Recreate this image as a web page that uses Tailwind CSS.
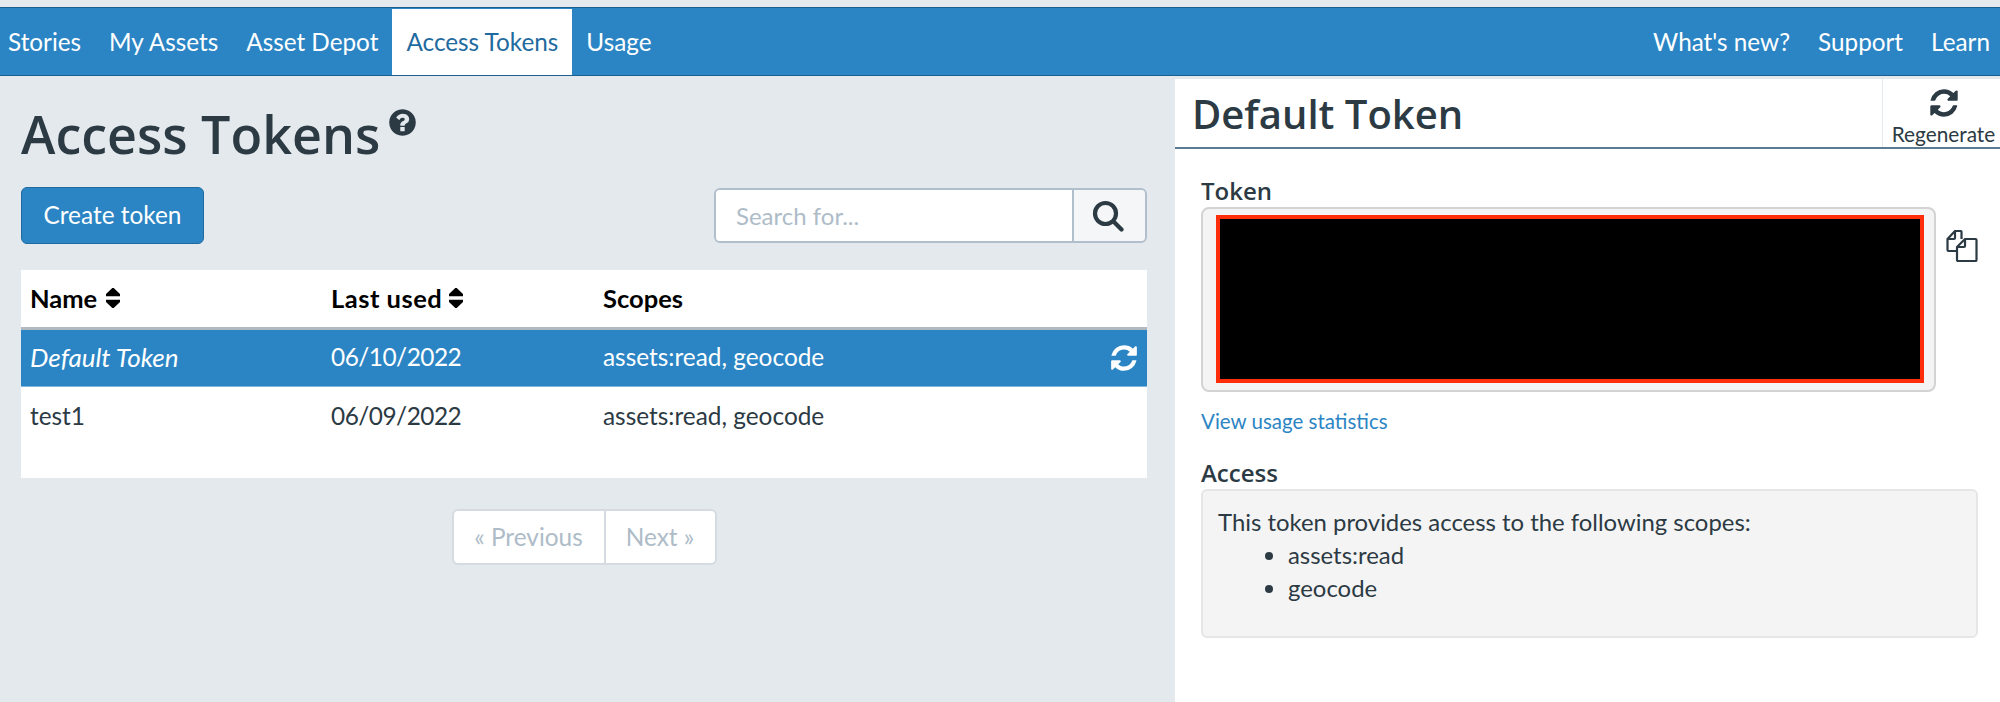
<!DOCTYPE html>
<html lang="en">
<head>
    <meta charset="UTF-8">
    <title>Access Tokens</title>
    <script src="https://cdn.jsdelivr.net/npm/@tailwindcss/browser@4"></script>
</head>
<body class="h-screen overflow-hidden bg-[#e4e9ed] pt-[7px] font-['Lato',sans-serif] text-[24.4px] text-[#2c3a44]">

    <!-- Top nav -->
    <nav class="flex h-[69px] justify-between border-y border-[#1a5f8f] bg-[#2b85c4] text-[24.3px] text-white">
        <div class="flex pt-px">
            <a class="flex h-[66px] items-center pl-2 pr-[14px]">Stories</a>
            <a class="flex h-[66px] items-center px-[14px]">My Assets</a>
            <a class="flex h-[66px] items-center px-[14px]">Asset Depot</a>
            <a class="flex h-[66px] items-center bg-white px-[14px] text-[#1f6a9e]">Access Tokens</a>
            <a class="flex h-[66px] items-center px-[14px]">Usage</a>
        </div>
        <div class="flex pt-px">
            <a class="flex h-[66px] items-center px-[14px]">What's new?</a>
            <a class="flex h-[66px] items-center px-[14px]">Support</a>
            <a class="flex h-[66px] items-center pl-[14px] pr-[10px]">Learn</a>
        </div>
    </nav>

    <div class="flex h-[626px]">
        <!-- Token list -->
        <main class="w-[1175px] shrink-0 pl-[21px] pr-[28px]">
            <div class="flex h-[111px] items-start pt-[23px]">
                <h1 class="font-['Open_Sans',sans-serif] text-[52px] font-semibold leading-[70px]">Access Tokens</h1>
                <svg class="ml-[7px] mt-[8px] h-[31px] w-[31px]" viewBox="0 0 1792 1792" fill="currentColor"><path d="M1024 1376v-192q0-14-9-23t-23-9h-192q-14 0-23 9t-9 23v192q0 14 9 23t23 9h192q14 0 23-9t9-23zm256-672q0-88-55.5-163t-138.5-116-170-41q-243 0-371 213-15 24 8 42l132 100q7 6 19 6 16 0 25-12 53-68 86-92 34-24 86-24 48 0 85.5 26t37.5 59q0 38-20 61t-68 45q-63 28-115.5 86.5t-52.5 125.5v36q0 14 9 23t23 9h192q14 0 23-9t9-23q0-19 21.5-49.5t54.5-49.5q32-18 49-28.5t46-35 44.5-48 28-60.5 12.5-81zm384 192q0 209-103 385.5t-279.5 279.5-385.5 103-385.5-103-279.5-279.5-103-385.5 103-385.5 279.5-279.5 385.5-103 385.5 103 279.5 279.5 103 385.5z"/></svg>
            </div>

            <div class="flex items-center justify-between">
                <button class="h-[57px] w-[183px] rounded-md border border-[#1f6a9e] bg-[#2b85c4] text-white">Create token</button>
                <div class="flex h-[55px] w-[433px] overflow-hidden rounded-md border-2 border-[#b0bfcb] text-[24px]">
                    <div class="flex flex-1 items-center bg-white px-[20px] text-[#aebcc8]">Search for...</div>
                    <div class="flex w-[73px] items-center justify-center border-l-2 border-[#b0bfcb] bg-[#f4f6f8] pr-[4px]">
                        <svg class="h-[32px] w-[32px]" viewBox="0 0 32 32" fill="none" stroke="#2c3a44" stroke-width="4.2" stroke-linecap="round"><circle cx="13.5" cy="13.5" r="10.5"/><line x1="21.5" y1="21.5" x2="29.5" y2="29.5"/></svg>
                    </div>
                </div>
            </div>

            <div class="mt-[26px] h-[208px] bg-white">
                <table class="w-full table-fixed border-collapse">
                    <thead>
                        <tr class="h-[58px] border-b-[3px] border-[#b0b9c1] text-[25.5px] text-black">
                            <th class="w-[301px] pl-[9px] text-left font-bold">
                                <span class="flex items-center gap-[9px]">Name
                                    <svg class="h-[20px] w-[14px]" viewBox="448 210 896 1372" preserveAspectRatio="none" fill="currentColor"><path d="M1344 1024q26 0 45 19t19 45-19 45l-448 448q-19 19-45 19t-45-19l-448-448q-19-19-19-45t19-45 45-19zm64-320q0 26-19 45t-45 19h-896q-26 0-45-19t-19-45 19-45l448-448q19-19 45-19t45 19l448 448q19 19 19 45z"/></svg>
                                </span>
                            </th>
                            <th class="w-[272px] pl-[9px] text-left font-bold">
                                <span class="flex items-center gap-[7px] tracking-[0.5px]">Last used
                                    <svg class="h-[20px] w-[14px]" viewBox="448 210 896 1372" preserveAspectRatio="none" fill="currentColor"><path d="M1344 1024q26 0 45 19t19 45-19 45l-448 448q-19 19-45 19t-45-19l-448-448q-19-19-19-45t19-45 45-19zm64-320q0 26-19 45t-45 19h-896q-26 0-45-19t-19-45 19-45l448-448q19-19 45-19t45 19l448 448q19 19 19 45z"/></svg>
                                </span>
                            </th>
                            <th class="pl-[9px] text-left font-bold">Scopes</th>
                            <th class="w-[50px]"></th>
                        </tr>
                    </thead>
                    <tbody>
                        <tr class="h-[58px] border-b border-[#7fb6dc] bg-[#2b85c4] text-white">
                            <td class="pl-[9px] text-[26px] italic">Default Token</td>
                            <td class="pl-[9px] tracking-[-0.5px]">06/10/2022</td>
                            <td class="pl-[9px]">assets:read, geocode</td>
                            <td>
                                <svg class="ml-[12px] h-[30px] w-[30px]" viewBox="0 0 1792 1792" fill="currentColor"><path d="M1639 1056q0 5-1 7-64 268-268 434.5t-478 166.5q-146 0-282.5-55t-243.5-157l-129 129q-19 19-45 19t-45-19-19-45v-448q0-26 19-45t45-19h448q26 0 45 19t19 45-19 45l-137 137q71 66 161 102t187 36q134 0 250-65t186-179q11-17 53-117 8-23 30-23h192q13 0 22.5 9.5t9.5 22.5zm25-800v448q0 26-19 45t-45 19h-448q-26 0-45-19t-19-45 19-45l138-138q-148-137-349-137-134 0-250 65t-186 179q-11 17-53 117-8 23-30 23h-199q-13 0-22.5-9.5t-9.5-22.5v-7q65-268 270-434.5t480-166.5q146 0 284 55.5t245 156.5l130-129q19-19 45-19t45 19 19 45z"/></svg>
                            </td>
                        </tr>
                        <tr class="h-[60px]">
                            <td class="pl-[9px]">test1</td>
                            <td class="pl-[9px] tracking-[-0.5px]">06/09/2022</td>
                            <td class="pl-[9px]">assets:read, geocode</td>
                            <td></td>
                        </tr>
                    </tbody>
                </table>
            </div>

            <!-- Pagination -->
            <div class="mt-[31px] flex justify-center">
                <div class="flex h-[56px] w-[265px] rounded-md border-2 border-[#d5dbe0] bg-white text-[#aebcc8]">
                    <span class="flex w-[152px] items-center justify-center border-r-2 border-[#d5dbe0]">« Previous</span>
                    <span class="flex flex-1 items-center justify-center">Next »</span>
                </div>
            </div>
        </main>

        <!-- Token detail -->
        <aside class="mt-[3px] flex-1 bg-white">
            <div class="flex h-[70px] border-b-2 border-[#5b7a93]">
                <h2 class="flex-1 pl-[17px] font-['Open_Sans',sans-serif] text-[40px] font-semibold leading-[70px]">Default Token</h2>
                <div class="flex w-[118px] flex-col items-center border-l border-[#e4e9ed] pl-[4px] pt-[8px] text-[20.8px] leading-[24px]">
                    <svg class="mb-[3px] h-[32px] w-[32px]" viewBox="0 0 1792 1792" fill="currentColor"><path d="M1639 1056q0 5-1 7-64 268-268 434.5t-478 166.5q-146 0-282.5-55t-243.5-157l-129 129q-19 19-45 19t-45-19-19-45v-448q0-26 19-45t45-19h448q26 0 45 19t19 45-19 45l-137 137q71 66 161 102t187 36q134 0 250-65t186-179q11-17 53-117 8-23 30-23h192q13 0 22.5 9.5t9.5 22.5zm25-800v448q0 26-19 45t-45 19h-448q-26 0-45-19t-19-45 19-45l138-138q-148-137-349-137-134 0-250 65t-186 179q-11 17-53 117-8 23-30 23h-199q-13 0-22.5-9.5t-9.5-22.5v-7q65-268 270-434.5t480-166.5q146 0 284 55.5t245 156.5l130-129q19-19 45-19t45 19 19 45z"/></svg>
                    Regenerate
                </div>
            </div>

            <div class="pl-[26px] pr-[22px]">
                <h3 class="mt-[26px] font-['Open_Sans',sans-serif] text-[24px] font-semibold leading-[32px]">Token</h3>
                <div class="flex items-center">
                    <div class="w-[735px] rounded-lg border-2 border-[#d3d3d3] bg-[#f4f4f4] pb-[7px] pl-[13px] pr-[10px] pt-[6px]">
                        <div class="h-[168px] border-4 border-[#ff2d0a] bg-black"></div>
                    </div>
                    <svg class="mb-[107px] ml-[10px] h-[32px] w-[32px]" viewBox="0 0 32 32" fill="none" stroke="#2c3a44" stroke-width="2.2" stroke-linejoin="round"><path d="M12 21H2.500a1 1 0 0 1-1-1V9L9 1h5.500a1 1 0 0 1 1 1v7"/><path d="M9 1.500V8a1 1 0 0 1-1 1H1.500"/><path d="M12 31a1 1 0 0 1-1-1V17l8-8h10.500a1 1 0 0 1 1 1v20a1 1 0 0 1-1 1z"/><path d="M19 9.500V16a1 1 0 0 1-1 1h-7"/></svg>
                </div>
                <a class="mt-[15px] block text-[20.5px] leading-[28px] text-[#2b85c4]">View usage statistics</a>
                <h3 class="mt-[22px] font-['Open_Sans',sans-serif] text-[24px] font-semibold leading-[32px]">Access</h3>
                <div class="h-[149px] rounded-md border-2 border-[#e6e6e6] bg-[#f4f4f4] pl-[15px] pt-[14px] text-[23.9px] leading-[33px]">
                    <p>This token provides access to the following scopes:</p>
                    <ul class="list-disc pl-[70px]">
                        <li>assets:read</li>
                        <li>geocode</li>
                    </ul>
                </div>
            </div>
        </aside>
    </div>

</body>
</html>
